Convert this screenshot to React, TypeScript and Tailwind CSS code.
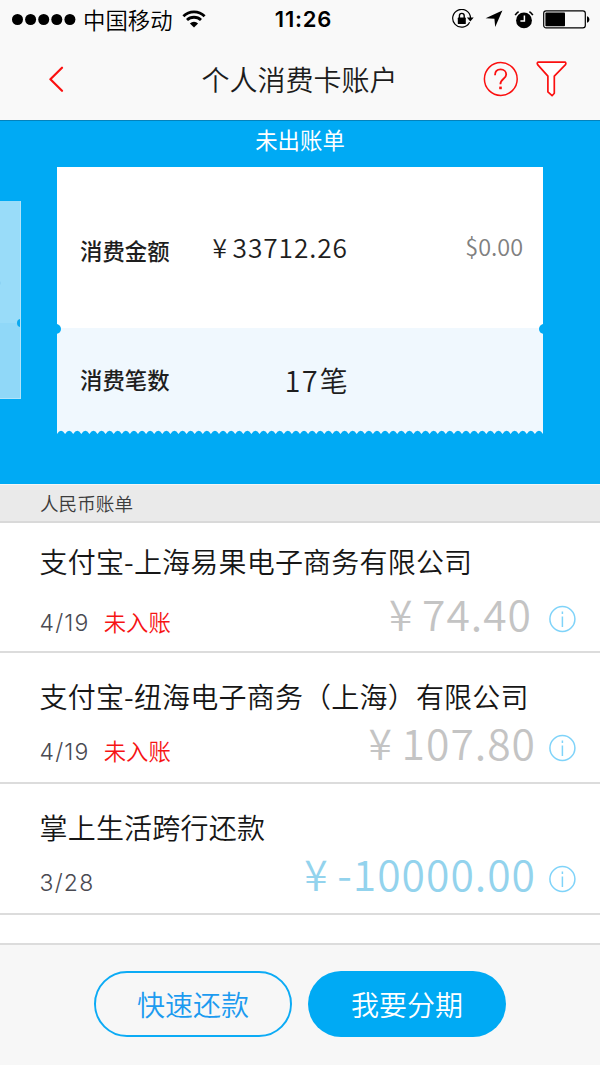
import React from "react";

const INFO_BLUE = "#7fd3f9";

const bills = [
  {
    title: "支付宝-上海易果电子商务有限公司",
    date: "4/19",
    status: "未入账",
    amount: "74.40",
    rowClass: "h-[130px] pt-[18px]",
    bottomClass: "mt-[11px]",
    amountClass: "text-[#c4c4c4] mr-[16px]",
  },
  {
    title: "支付宝-纽海电子商务（上海）有限公司",
    date: "4/19",
    status: "未入账",
    amount: "107.80",
    rowClass: "h-[131px] pt-[23px]",
    bottomClass: "mt-[5px]",
    amountClass: "text-[#c4c4c4] mr-[12px]",
  },
  {
    title: "掌上生活跨行还款",
    date: "3/28",
    status: "",
    amount: "-10000.00",
    rowClass: "h-[131px] pt-[23px]",
    bottomClass: "mt-[5px]",
    amountClass: "text-[#93d3ed] mr-[12px]",
  },
];

const StatusBar = () => (
  <div className="grid grid-cols-3 items-center h-10 text-black">
    <div className="flex items-center pl-3">
      <svg className="shrink-0" width="64" height="12" viewBox="0 0 64 12">
        {[5.5, 18.6, 31.7, 44.8, 57.9].map((x) => (
          <circle key={x} cx={x} cy="5.5" r="5.5" />
        ))}
      </svg>
      <span className="ml-[7px] -mt-[2px] text-[22.4px] font-[350] leading-[38px] whitespace-nowrap">中国移动</span>
      <svg className="ml-[9px] -mt-[2px] shrink-0" width="24" height="18" viewBox="0 0 24 18" fill="none" stroke="#000" strokeWidth="2.8">
        <path d="M1.4 6.2a15 15 0 0 1 21.2 0" />
        <path d="M5 10.1a10 10 0 0 1 14 0" />
        <path d="M12 17.4 7.9 13.4a6 6 0 0 1 8.2 0z" fill="#000" stroke="none" />
      </svg>
    </div>
    <div className="text-center font-['Inter'] font-semibold text-[22px] tracking-[0.8px] leading-[38px] -mt-[2px] pl-[7px]">11:26</div>
    <div className="flex items-center justify-end pr-[10px] -mt-[2px]">
      <svg width="22" height="20" viewBox="0 0 22 20" fill="none" stroke="#000" strokeWidth="1.2">
        <path d="M17.6 13.2a8.9 8.9 0 1 1 .9-4.2" />
        <path d="M14.9 8.6h6.8l-3.4 3.8z" fill="#000" stroke="none" />
        <rect x="5.8" y="8.6" width="8" height="6.4" rx="0.6" fill="#000" stroke="none" />
        <path d="M7.4 9V6.8a2.4 2.4 0 0 1 4.8 0V9" strokeWidth="1.4" />
      </svg>
      <svg className="ml-[11px]" width="18" height="18" viewBox="0 0 18 18">
        <path d="M17.4.6 10.2 17 9.4 8.8 .6 8.2z" />
      </svg>
      <svg className="ml-[11px]" width="20" height="19" viewBox="0 0 20 19">
        <circle cx="10" cy="10.4" r="7.9" />
        <path d="M1.2 5.2A10 10 0 0 1 4.6 1.6M18.8 5.2a10 10 0 0 0-3.4-3.6" fill="none" stroke="#000" strokeWidth="1.6" />
        <path d="M10.4 5.6v5.4H6.4" fill="none" stroke="#fff" strokeWidth="1.5" />
      </svg>
      <svg className="ml-[9px]" width="47" height="19" viewBox="0 0 47 19">
        <rect x="0.7" y="0.9" width="41.6" height="17" rx="2.4" fill="none" stroke="#000" strokeWidth="1.2" />
        <rect x="2.4" y="2.6" width="19.6" height="13.7" rx="0.8" />
        <path d="M44 6.2c3.2 1 3.2 5.6 0 6.5z" />
      </svg>
    </div>
  </div>
);

const NavBar = () => (
  <div className="flex items-center h-[78px] pl-[48px] pr-[32px]">
    <svg width="17" height="26" viewBox="0 0 17 26" fill="none" stroke="#fb1010" strokeWidth="2.2" strokeLinecap="round" strokeLinejoin="round">
      <path d="M14 1.7 2.4 13.3 14 24.8" />
    </svg>
    <h1 className="flex-1 pl-[51px] text-center text-[28px] font-[350] leading-[78px] text-[#1c1c1c]">个人消费卡账户</h1>
    <svg width="36" height="36" viewBox="0 0 36 36" fill="none" stroke="#fb1010" strokeWidth="1.5">
      <circle cx="17.8" cy="18" r="16.4" />
      <path d="M12 14.2c0-3.6 2.2-5.8 5.6-5.8s5.6 2.1 5.6 5.1c0 4.4-5.8 4.2-5.8 9.8" strokeWidth="1.8" />
      <rect x="16.2" y="25.6" width="2.6" height="2.6" fill="#fb1010" stroke="none" />
    </svg>
    <svg className="ml-[17px]" width="32" height="36" viewBox="0 0 32 36" fill="none" stroke="#fb1010" strokeWidth="1.7" strokeLinejoin="round">
      <path d="M2.6 1.2h26.2c1 0 1.4 1.2.7 2.4L18.3 15.1v17.2l-2.2 2.4-4.2-3.8V15.1L1.6 3.6C.8 2.4 1.4 1.2 2.6 1.2z" fill="#fff" />
    </svg>
  </div>
);

// Perforated lower edge of the bill ticket
const TicketEdge = () => {
  const step = 8.1;
  let d = "M0 0H486V4";
  for (let i = 60; i > 0; i--) {
    const x = i * step;
    d += `Q${x - step / 2} -2.5 ${x - step} 4`;
  }
  return (
    <svg className="block" width="486" height="4" viewBox="0 0 486 4">
      <path d={`${d}Z`} fill="#f0f8fe" />
    </svg>
  );
};

const Summary = () => (
  <section className="relative h-[364px] bg-[#00aaf4] border-t border-[#0482bb] overflow-hidden">
    <div className="h-[46px] text-center text-[22.4px] leading-[36px] text-white">未出账单</div>
    {/* neighbouring card peeking in from the carousel */}
    <div className="absolute left-0 top-[80px] w-[21px] h-[198px] overflow-hidden bg-[#99dcf9] border-r border-b border-[#b2e4fa]">
      <div className="mt-[122px] h-[76px] bg-[#90d8f8]" />
      <div className="absolute left-[17px] top-[118px] size-2 rounded-full bg-[#0aa9f0]" />
      <div className="absolute -left-[3px] top-[80px] size-1 rounded-full bg-[#8cd3f4]" />
    </div>
    <div className="relative mx-[57px]">
      <div className="flex items-center h-[161px] bg-white pl-[23px] pr-[20px]">
        <span className="text-[22.4px] font-medium leading-8 text-[#1e1e1e] mt-[4px]">消费金额</span>
        <span className="ml-[43px] -mt-[2px] font-[350] text-[26.3px] leading-8 tracking-[0.9px] text-[#1e1e1e] flex">
          <span className="w-[20px]">¥</span>
          <span>33712.26</span>
        </span>
        <span className="ml-auto -mt-[3px] font-[350] text-[23.4px] leading-8 text-[#808080]">$0.00</span>
      </div>
      <div className="flex items-center h-[102px] bg-[#f0f8fe] pl-[23px]">
        <span className="text-[22.4px] font-medium leading-8 text-[#1e1e1e]">消费笔数</span>
        <span className="ml-[115px] text-[#1e1e1e] font-[350] leading-8 flex items-center">
          <span className="-mt-px text-[29px] tracking-[1.2px]">17</span>
          <span className="ml-px mt-px text-[28px]">笔</span>
        </span>
      </div>
      <TicketEdge />
      <div className="absolute -left-[6px] top-[157px] size-[10px] rounded-full bg-[#00aaf4]" />
      <div className="absolute -right-[6px] top-[157px] size-[10px] rounded-full bg-[#00aaf4]" />
    </div>
  </section>
);

const InfoIcon = () => (
  <svg className="mt-[8px]" width="28" height="28" viewBox="0 0 28 28" fill="none" stroke={INFO_BLUE} strokeWidth="1.5">
    <circle cx="14.4" cy="14" r="12.5" />
    <path d="M14.4 11.5V22M14.4 6.4v2.6" />
  </svg>
);

export default function App() {
  return (
    <div className="flex flex-col w-[600px] h-[1065px] overflow-hidden bg-white font-['Noto_Sans_CJK_SC',sans-serif]">
      <header className="h-[120px] shrink-0 bg-[#f9f9f9]">
        <StatusBar />
        <NavBar />
      </header>

      <Summary />

      <div className="h-[39px] shrink-0 bg-[#eaeaea] border-t border-t-[#f6f6f6] border-b-2 border-b-[#d9d9d9] pl-[40px] text-[18.6px] font-[350] leading-[35px] text-[#3c3c3c]">
        人民币账单
      </div>

      <main className="flex-1">
        {bills.map((bill) => (
          <div key={bill.title} className={`pl-[39.5px] pr-[24px] border-b-2 border-[#dcdcdc] ${bill.rowClass}`}>
            <h2 className="text-[28px] font-[350] leading-10 tracking-[0.2px] text-[#161616] whitespace-nowrap">{bill.title}</h2>
            <div className={`flex items-center h-[46px] ${bill.bottomClass}`}>
              <span className="mt-[16px] font-['Inter'] font-light text-[23px] tracking-[1.2px] text-[#4a4a52]">{bill.date}</span>
              <span className="mt-[12px] ml-[14px] text-[22.4px] font-[350] leading-8 text-[#f61414]">{bill.status}</span>
              <span className={`ml-auto -mt-[4px] flex font-[350] text-[42.6px] leading-[46px] tracking-[1px] ${bill.amountClass}`}>
                <span className="w-[33px]">¥</span>
                <span>{bill.amount}</span>
              </span>
              <InfoIcon />
            </div>
          </div>
        ))}
      </main>

      <footer className="flex shrink-0 justify-center gap-[16px] h-[122px] bg-[#f7f7f7] border-t-2 border-[#dcdcdc] pt-[26px]">
        <button className="w-[198px] h-[66px] rounded-full border-2 border-[#0cabf5] text-[28px] font-[350] text-[#1c9bf0] leading-[62px]">快速还款</button>
        <button className="w-[198px] h-[66px] rounded-full bg-[#00aaf4] text-[28px] font-[350] text-white leading-[66px]">我要分期</button>
      </footer>
    </div>
  );
}
